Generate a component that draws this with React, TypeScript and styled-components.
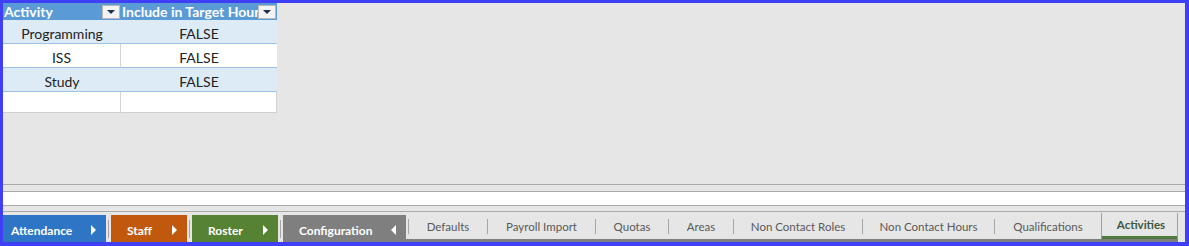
import React from "react";
import styled, { createGlobalStyle } from "styled-components";

const GlobalStyle = createGlobalStyle`
  html, body { margin: 0; padding: 0; background: #ffffff; }
  * { box-sizing: border-box; }
`;

const Frame = styled.div`
  width: 1189px;
  height: 246px;
  border-style: solid;
  border-color: #3f3ff6;
  border-width: 3px 4px 4px 3px;
  background: #e6e6e6;
  display: flex;
  flex-direction: column;
  overflow: hidden;
  font-family: Lato, "Liberation Sans", sans-serif;
`;

const Sheet = styled.div`
  height: 181px;
  flex: none;
`;

const Table = styled.div`
  display: grid;
  grid-template-columns: 118px 156px;
  width: 274px;
`;

const HeaderCell = styled.div`
  height: 17px;
  background: #5b9bd5;
  color: #ffffff;
  font-weight: 700;
  font-size: 14px;
  display: flex;
  align-items: center;
  padding: 0 1px 0 1px;
  overflow: hidden;
`;

const HeaderText = styled.span`
  flex: 1;
  min-width: 0;
  white-space: nowrap;
  overflow: hidden;
  line-height: 17px;
`;

const FilterButton = styled.span`
  flex: none;
  width: 18px;
  height: 14px;
  background: #f3f3f3;
  border: 1px solid #b8b8b8;
  display: flex;
  align-items: center;
  justify-content: center;
  &::after {
    content: "";
    width: 0;
    height: 0;
    border-left: 4px solid transparent;
    border-right: 4px solid transparent;
    border-top: 4px solid #1f2f55;
    margin-top: 1px;
  }
`;

const Cell = styled.div<{ $band?: boolean; $divider?: boolean; $empty?: boolean }>`
  height: ${(p) => (p.$empty ? "21px" : "24px")};
  background: ${(p) => (p.$band ? "#ddebf7" : "#ffffff")};
  border-bottom: 1px solid ${(p) => (p.$empty ? "#cfcfcf" : "#9bc2e6")};
  border-right: ${(p) => (p.$divider ? "1px solid #d4d4d4" : "none")};
  color: #222222;
  font-size: 14px;
  display: flex;
  align-items: center;
  justify-content: center;
  padding-top: 3px;
`;

const HLine = styled.div`
  height: 1px;
  flex: none;
  background: #aaaaaa;
`;

const Strip = styled.div<{ $h: number; $white?: boolean }>`
  height: ${(p) => p.$h}px;
  flex: none;
  background: ${(p) => (p.$white ? "#ffffff" : "#e6e6e6")};
`;

const TabRow = styled.div`
  flex: 1;
  display: flex;
  align-items: flex-end;
`;

const ColorTab = styled.div<{ $bg: string; $w: number; $pl: number }>`
  width: ${(p) => p.$w}px;
  height: 27px;
  flex: none;
  background: ${(p) => p.$bg};
  color: #ffffff;
  font-weight: 700;
  font-size: 12px;
  display: flex;
  align-items: center;
  justify-content: space-between;
  padding: 3px 10px 0 ${(p) => p.$pl}px;
  white-space: nowrap;
`;

const Arrow = styled.span<{ $left?: boolean }>`
  width: 0;
  height: 0;
  border-top: 5px solid transparent;
  border-bottom: 5px solid transparent;
  ${(p) =>
    p.$left
      ? "border-right: 5px solid #ffffff;"
      : "border-left: 5px solid #ffffff;"}
`;

const ColorSep = styled.div`
  width: 5px;
  height: 27px;
  flex: none;
  display: flex;
  align-items: center;
  justify-content: center;
  &::after {
    content: "";
    width: 1px;
    height: 18px;
    background: #a6a6a6;
    margin-left: -1px;
  }
`;

const PlainSection = styled.div`
  height: 29px;
  display: flex;
  align-items: stretch;
  padding-left: 2px;
  border-bottom: 3px solid #7f7f7f;
`;

const Sep = styled.div`
  width: 1px;
  height: 15px;
  align-self: center;
  background: #a6a6a6;
  flex: none;
`;

const PlainTab = styled.div<{ $w: number }>`
  width: ${(p) => p.$w}px;
  flex: none;
  display: flex;
  align-items: center;
  justify-content: center;
  font-size: 11.5px;
  color: #595959;
  white-space: nowrap;
`;

const ActiveTab = styled.div`
  width: 77px;
  flex: none;
  display: flex;
  align-items: center;
  justify-content: center;
  padding: 0 0 3px 3px;
  font-size: 11.5px;
  font-weight: 700;
  color: #3a5a42;
  white-space: nowrap;
  border-left: 1px solid #a0a0a0;
  border-right: 1px solid #a0a0a0;
  box-shadow: inset 0 -3px 0 #4f7a3e;
`;

const rows = [
  { activity: "Programming", value: "FALSE", band: true },
  { activity: "ISS", value: "FALSE", band: false },
  { activity: "Study", value: "FALSE", band: true },
];

const colorTabs = [
  { label: "Attendance", bg: "#2e75c5", w: 103, pl: 8 },
  { label: "Staff", bg: "#c0590e", w: 76, pl: 16 },
  { label: "Roster", bg: "#558233", w: 86, pl: 16 },
  { label: "Configuration", bg: "#7f7f7f", w: 123, pl: 16, left: true },
];

const plainTabs = [
  { label: "Defaults", w: 78 },
  { label: "Payroll Import", w: 107 },
  { label: "Quotas", w: 72 },
  { label: "Areas", w: 64 },
  { label: "Non Contact Roles", w: 128 },
  { label: "Non Contact Hours", w: 131 },
  { label: "Qualifications", w: 106 },
];

export default function App() {
  return (
    <>
      <GlobalStyle />
      <Frame>
        <Sheet>
          <Table>
            <HeaderCell>
              <HeaderText>Activity</HeaderText>
              <FilterButton />
            </HeaderCell>
            <HeaderCell>
              <HeaderText>Include in Target Hours</HeaderText>
              <FilterButton />
            </HeaderCell>
            {rows.map((r) => (
              <React.Fragment key={r.activity}>
                <Cell $band={r.band} $divider={!r.band}>
                  {r.activity}
                </Cell>
                <Cell $band={r.band}>{r.value}</Cell>
              </React.Fragment>
            ))}
            <Cell $empty $divider />
            <Cell $empty $divider />
          </Table>
        </Sheet>
        <HLine />
        <Strip $h={6} />
        <HLine />
        <Strip $h={13} $white />
        <HLine />
        <Strip $h={5} />
        <HLine />
        <TabRow>
          {colorTabs.map((t, i) => (
            <React.Fragment key={t.label}>
              {i > 0 && <ColorSep />}
              <ColorTab $bg={t.bg} $w={t.w} $pl={t.pl}>
                <span>{t.label}</span>
                <Arrow $left={t.left} />
              </ColorTab>
            </React.Fragment>
          ))}
          <PlainSection>
            {plainTabs.map((t) => (
              <React.Fragment key={t.label}>
                <Sep />
                <PlainTab $w={t.w}>{t.label}</PlainTab>
              </React.Fragment>
            ))}
            <ActiveTab>Activities</ActiveTab>
          </PlainSection>
        </TabRow>
      </Frame>
    </>
  );
}
